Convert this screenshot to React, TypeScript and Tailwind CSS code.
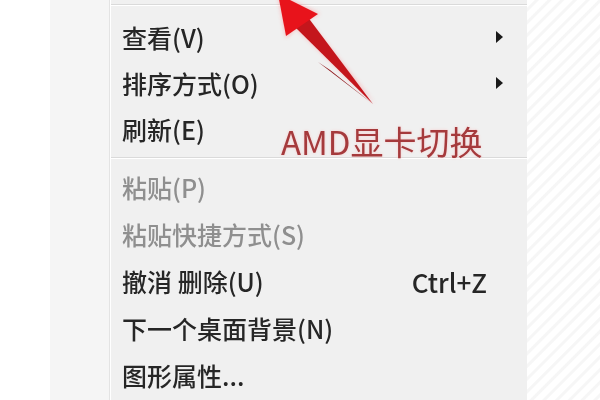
import React from 'react'

type Item = {
  label: string
  disabled?: boolean
  submenu?: boolean
  shortcut?: string
}

const topItems: Item[] = [
  { label: '查看(V)', submenu: true },
  { label: '排序方式(O)', submenu: true },
  { label: '刷新(E)' },
]

const bottomItems: Item[] = [
  { label: '粘贴(P)', disabled: true },
  { label: '粘贴快捷方式(S)', disabled: true },
  { label: '撤消 删除(U)', shortcut: 'Ctrl+Z' },
  { label: '下一个桌面背景(N)' },
  { label: '图形属性...' },
]

function Separator() {
  return (
    <div className="flex flex-col">
      <div className="h-px bg-[#dadada]" />
      <div className="h-px bg-white" />
    </div>
  )
}

function MenuRow({ item, tall }: { item: Item; tall?: boolean }) {
  return (
    <div className={`flex items-center ${tall ? 'h-[47px]' : 'h-[46px]'} pl-[11px]`}>
      <span
        className={`flex-1 text-[25px] leading-none font-medium whitespace-nowrap ${
          item.disabled ? 'text-[#8f8f8f]' : 'text-[#262626]'
        }`}
      >
        {item.label}
      </span>
      {item.shortcut && (
        <span className="mr-[40px] text-[26px] leading-none font-medium text-[#262626]">
          {item.shortcut}
        </span>
      )}
      {item.submenu && (
        <svg width="7" height="12" viewBox="0 0 7 12" className="mr-[24px]">
          <path d="M0 0 L7 6 L0 12 Z" fill="#1a1a1a" />
        </svg>
      )}
    </div>
  )
}

export default function App() {
  return (
    <div
      className="relative flex w-[600px] h-[400px] overflow-hidden bg-white blur-[0.4px]"
      style={{ fontFamily: '"Noto Sans CJK SC", "Noto Sans", sans-serif' }}
    >
      {/* left desktop strip */}
      <div className="w-[50px] bg-white" />

      {/* icon gutter */}
      <div className="w-[60px] bg-[#f5f5f5] border-r border-[#e3e3e3]" />
      <div className="w-px bg-white" />

      {/* menu body */}
      <div className="w-[416px] bg-[#f0f0f0] flex flex-col pt-[4px]">
        <Separator />
        <div className="h-[8px]" />
        {topItems.map((item) => (
          <MenuRow key={item.label} item={item} />
        ))}
        <div className="h-[5px]" />
        <Separator />
        <div className="h-[5px]" />
        {bottomItems.map((item) => (
          <MenuRow key={item.label} item={item} tall />
        ))}
      </div>

      {/* hatched desktop on the right */}
      <div className="flex-1 bg-[repeating-linear-gradient(135deg,#ffffff_0px,#ffffff_5px,#f6f6f6_6px,#f6f6f6_8px,#ffffff_9px)]" />

      {/* annotation arrow */}
      <svg
        className="absolute left-0 top-0 pointer-events-none"
        width="600"
        height="400"
        viewBox="0 0 600 400"
      >
        <defs>
          <filter id="glow" x="-20%" y="-20%" width="140%" height="140%">
            <feGaussianBlur stdDeviation="2" />
          </filter>
        </defs>
        <g filter="url(#glow)" opacity="0.45">
          <polygon points="278,-6 320,14 307,19 375,104 296,28 286,38" fill="#ff6f73" />
        </g>
        <polygon points="307,16 373,104 295,27" fill="#c4161c" />
        <polygon points="318,62 373,104 330,70" fill="#8e1216" />
        <polygon points="278,-6 318,14 286,36" fill="#e8131b" />
      </svg>

      {/* annotation label */}
      <span
        className="absolute left-[281px] top-[125px] text-[33px] leading-none text-[#a53a3c] whitespace-nowrap [text-shadow:0_0_3px_#f7c9c9]"
      >
        AMD显卡切换
      </span>
    </div>
  )
}
